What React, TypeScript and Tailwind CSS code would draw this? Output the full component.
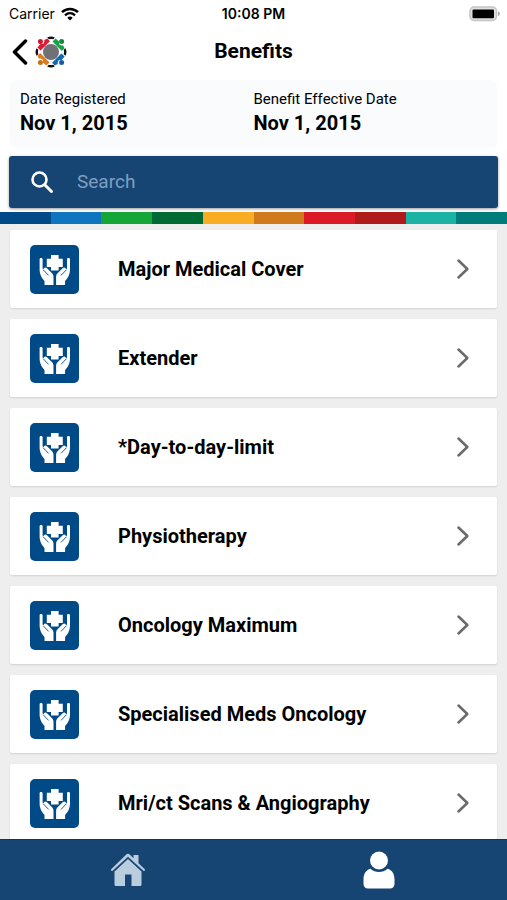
import React from "react";

const benefits: string[] = [
  "Major Medical Cover",
  "Extender",
  "*Day-to-day-limit",
  "Physiotherapy",
  "Oncology Maximum",
  "Specialised Meds Oncology",
  "Mri/ct Scans & Angiography",
];

const stripe: string[] = [
  "bg-[#004b87]",
  "bg-[#0f75bf]",
  "bg-[#15a638]",
  "bg-[#006a34]",
  "bg-[#f8ad22]",
  "bg-[#d07a1b]",
  "bg-[#dc1a26]",
  "bg-[#b01a18]",
  "bg-[#1cb2a4]",
  "bg-[#007d7b]",
];

function WifiIcon() {
  return (
    <svg viewBox="0 0 18 14" className="h-[14px] w-[18px]" fill="none" stroke="#000" aria-hidden="true">
      <path d="M1 5.2C5.5.8 12.5.8 17 5.2" strokeWidth="2.5" />
      <path d="M4 8.3c3-2.800 7-2.800 10 0" strokeWidth="2.3" />
      <path d="M6.300 10.700c1.600-1.500 3.800-1.500 5.400 0L9 13.500z" fill="#000" stroke="none" />
    </svg>
  );
}

function BatteryIcon() {
  return (
    <svg viewBox="0 0 32 16" className="h-4 w-8" aria-hidden="true">
      <rect x="1" y="1" width="26.500" height="13.500" rx="4" fill="#e0e0e0" stroke="#c4c4c4" strokeWidth="1.500" />
      <rect x="3.500" y="3.500" width="21.500" height="8.800" rx="1" fill="#000" />
      <path d="M29 5.500c2.500.5 2.500 4 0 4.500z" fill="#aaa" />
    </svg>
  );
}

function LogoArm({ color, head, angle }: { color: string; head: string; angle: number }) {
  return (
    <g transform={`rotate(${angle} 16 16)`}>
      <path d="M12.200 1.500Q16-.4 19.800 1.500L18.300 3.300Q16 2.600 13.700 3.300z" fill="#111" />
      <path d="M17.500 5.600L20.600 2.400l3.800 3.300-.3 2.500 2.300 1.200 1.700-.2 1.500 3.100-2.800 2.600z" fill={color} />
      <circle cx="26.600" cy="5.400" r="2.500" fill={head} />
    </g>
  );
}

function Logo() {
  return (
    <svg viewBox="0 0 32 32" className="h-8 w-8" aria-hidden="true">
      <LogoArm color="#12a548" head="#0f8a42" angle={0} />
      <LogoArm color="#1268b8" head="#1a5ca8" angle={90} />
      <LogoArm color="#dc7c1c" head="#c8701a" angle={180} />
      <LogoArm color="#e01836" head="#cc1a34" angle={270} />
      <circle cx="16" cy="16" r="8" fill="#707174" />
    </svg>
  );
}

function Hand() {
  return (
    <g>
      <path d="M9.600 14c0-1.500 3-1.500 3 0v9.600l1 .9c0-2 2-2.600 3.400-1.300l4.800 4.900c1.100 1.100 1.700 2.200 1.700 3.700v8.200h-9v-4c-2.500-2.500-4-5.300-4.600-8.400-.3-1.200-.3-2.400-.3-3.600z" />
      <path d="M13.200 24.800l5.400 5.600" stroke="#004b87" strokeWidth=".9" />
    </g>
  );
}

function CareIcon() {
  return (
    <svg viewBox="0 0 49 49" className="h-[49px] w-[49px] shrink-0 rounded-[5px] bg-[#004b87]" fill="#fff" aria-hidden="true">
      <Hand />
      <g transform="translate(49.600 0) scale(-1 1)">
        <Hand />
      </g>
      <path d="M21 10h7.600v3.800h4.200V22h-4.200v3.500H21V22h-4.200v-8.200H21z" stroke="#004b87" strokeWidth="1" paintOrder="stroke" />
    </svg>
  );
}

export default function App() {
  return (
    <div className="flex h-screen flex-col bg-white font-['Roboto','Liberation_Sans',sans-serif] text-black">
      <div className="grid h-7 shrink-0 grid-cols-3 items-center px-[9px] font-['Inter',sans-serif] text-sm">
        <div className="flex items-center gap-1.5">
          <span>Carrier</span>
          <WifiIcon />
        </div>
        <span className="text-center font-semibold">10:08 PM</span>
        <div className="-mr-[3px] flex justify-end">
          <BatteryIcon />
        </div>
      </div>

      <header className="grid h-12 shrink-0 grid-cols-3 items-center px-3">
        <div className="flex items-center gap-[7px]">
          <button type="button" aria-label="Back">
            <svg viewBox="0 0 16 26" className="h-[26px] w-4" fill="none" stroke="#000" strokeWidth="3.500" strokeLinecap="round" strokeLinejoin="round">
              <path d="M13.500 2L2.500 13l11 11" />
            </svg>
          </button>
          <Logo />
        </div>
        <h1 className="text-center text-[21px] font-bold">Benefits</h1>
      </header>

      <dl className="mx-2.5 mt-1 grid h-[68px] shrink-0 grid-cols-2 rounded-md bg-[#f9fbfc] pt-[9px]">
        <div className="pl-2.5">
          <dt className="text-[15px] leading-5">Date Registered</dt>
          <dd className="text-xl leading-7 font-bold">Nov 1, 2015</dd>
        </div>
        <div>
          <dt className="text-[15px] leading-5">Benefit Effective Date</dt>
          <dd className="text-xl leading-7 font-bold">Nov 1, 2015</dd>
        </div>
      </dl>

      <label className="mx-[9px] mt-2 flex h-[52px] shrink-0 items-center gap-[23px] rounded-[3px] bg-[#174573] pl-[21px] shadow-[0_1px_3px_rgba(0,0,0,0.4)]">
        <svg viewBox="0 0 24 24" className="h-6 w-6 shrink-0" fill="none" stroke="#fff" strokeWidth="2.600" strokeLinecap="round" aria-hidden="true">
          <circle cx="9.500" cy="9.500" r="7" />
          <path d="M15 15l6.500 6.500" strokeWidth="3" />
        </svg>
        <input
          type="search"
          aria-label="Search"
          placeholder="Search"
          className="min-w-0 flex-1 bg-transparent text-[19px] text-white outline-none placeholder:text-[#7f9fc1]"
        />
      </label>

      <div className="mt-1 flex h-3 shrink-0">
        {stripe.map((color) => (
          <div key={color} className={`flex-1 ${color}`} />
        ))}
      </div>

      <main className="min-h-0 flex-1 overflow-y-auto bg-[#eeeeee] px-2.5 pt-1.5 [scrollbar-width:none]">
        <ul className="flex flex-col gap-[11px]">
          {benefits.map((name) => (
            <li key={name}>
              <button
                type="button"
                className="flex h-[78px] w-full items-center rounded-[2px] bg-white pr-7 pl-5 text-left shadow-[0_1px_2px_rgba(0,0,0,0.12)]"
              >
                <CareIcon />
                <span className="ml-[39px] flex-1 text-xl font-bold">{name}</span>
                <svg viewBox="0 0 12 20" className="h-5 w-3" fill="none" stroke="#6a6a6a" strokeWidth="2.500" strokeLinecap="round" strokeLinejoin="round" aria-hidden="true">
                  <path d="M1.500 1.500L10.300 10l-8.800 8.500" />
                </svg>
              </button>
            </li>
          ))}
        </ul>
      </main>

      <nav className="grid h-[61px] shrink-0 grid-cols-2 border-t border-[#0d3760] bg-[#174573] px-[3px]">
        <button type="button" aria-label="Home" className="flex items-center justify-center">
          <svg viewBox="0 0 36 34" className="h-[34px] w-9" fill="#b9cddf">
            <path d="M18 .8c.7 0 1.200.3 1.700.8l3.800 3.700V2h5v8.200l6.300 6.100c.8.8-.4 2.300-1.400 1.500L18 3.700 2.600 17.800c-1 .8-2.200-.7-1.400-1.500L16.300 1.600c.5-.5 1-.8 1.700-.8z" />
            <path d="M18 6l13.500 12.400v13.100c0 1-.6 1.500-1.500 1.500h-8.500V21.500h-6.500V33H6c-.9 0-1.500-.5-1.500-1.500V18.400z" />
          </svg>
        </button>
        <button type="button" aria-label="Profile" className="flex items-center justify-center">
          <svg viewBox="0 0 32 38" className="h-[38px] w-8" fill="#fff">
            <circle cx="16" cy="9.500" r="9" />
            <path d="M7.500 17.800c4.800 4.300 12.200 4.300 17 0 4.700 1.200 7 5.500 7 10.700v4.500c0 2.700-1.800 4.500-4.500 4.500H5c-2.700 0-4.500-1.800-4.500-4.500v-4.500c0-5.200 2.300-9.500 7-10.700z" />
          </svg>
        </button>
      </nav>
    </div>
  );
}
